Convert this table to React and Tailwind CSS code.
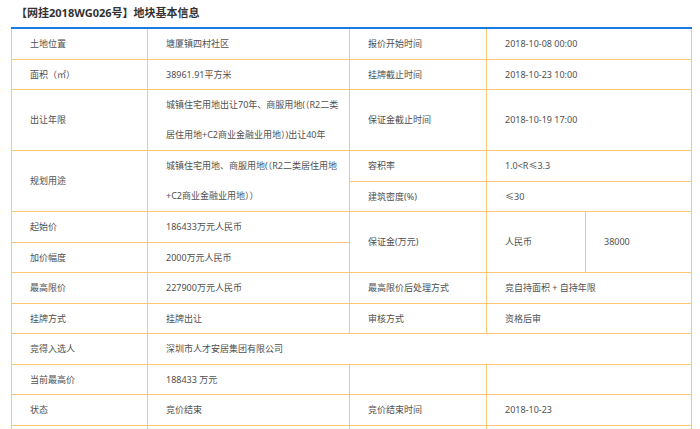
export default function App() {
  const td = "border border-[#fdc674] pl-[18px] pr-1 align-middle leading-[29.5px] whitespace-nowrap";
  return (
    <div className="w-[700px] h-[429px] overflow-hidden bg-white text-[#505050]" style={{ fontFamily: '"Noto Sans", "Noto Sans CJK SC", sans-serif' }}>
      <div className="pl-[16px] pt-[4px] h-[27px] text-[11px] font-bold text-[#333] leading-[17px]">【网挂2018WG026号】地块基本信息</div>
      <table className="ml-[11px] w-[680px] table-fixed border-collapse border-t-2 border-t-[#1a7be0] text-[9px]">
        <colgroup>
          <col className="w-[136px]" />
          <col className="w-[202px]" />
          <col className="w-[137px]" />
          <col className="w-[99px]" />
          <col className="w-[106px]" />
        </colgroup>
        <tbody>
          <tr>
            <td className={td}>土地位置</td>
            <td className={td}>塘厦镇四村社区</td>
            <td className={td}>报价开始时间</td>
            <td className={td} colSpan={2}>2018-10-08 00:00</td>
          </tr>
          <tr>
            <td className={td}>面积（㎡）</td>
            <td className={td}>38961.91平方米</td>
            <td className={td}>挂牌截止时间</td>
            <td className={td} colSpan={2}>2018-10-23 10:00</td>
          </tr>
          <tr>
            <td className={td}>出让年限</td>
            <td className={td + " !leading-[30px]"}>城镇住宅用地出让70年、商服用地(（R2二类<br />居住用地+C2商业金融业用地）)出让40年</td>
            <td className={td}>保证金截止时间</td>
            <td className={td} colSpan={2}>2018-10-19 17:00</td>
          </tr>
          <tr>
            <td className={td} rowSpan={2}>规划用途</td>
            <td className={td + " !leading-[30px]"} rowSpan={2}>城镇住宅用地、商服用地(（R2二类居住用地<br />+C2商业金融业用地））</td>
            <td className={td}>容积率</td>
            <td className={td} colSpan={2}>1.0&lt;R≤3.3</td>
          </tr>
          <tr>
            <td className={td}>建筑密度(%)</td>
            <td className={td} colSpan={2}>≤30</td>
          </tr>
          <tr>
            <td className={td}>起始价</td>
            <td className={td}>186433万元人民币</td>
            <td className={td} rowSpan={2}>保证金(万元)</td>
            <td className={td} rowSpan={2}>人民币</td>
            <td className={td} rowSpan={2}>38000</td>
          </tr>
          <tr>
            <td className={td}>加价幅度</td>
            <td className={td}>2000万元人民币</td>
          </tr>
          <tr>
            <td className={td}>最高限价</td>
            <td className={td}>227900万元人民币</td>
            <td className={td}>最高限价后处理方式</td>
            <td className={td} colSpan={2}>竞自持面积 + 自持年限</td>
          </tr>
          <tr>
            <td className={td}>挂牌方式</td>
            <td className={td}>挂牌出让</td>
            <td className={td}>审核方式</td>
            <td className={td} colSpan={2}>资格后审</td>
          </tr>
          <tr>
            <td className={td}>竞得入选人</td>
            <td className={td} colSpan={4}>深圳市人才安居集团有限公司</td>
          </tr>
          <tr>
            <td className={td}>当前最高价</td>
            <td className={td}>188433 万元</td>
            <td className={td}></td>
            <td className={td} colSpan={2}></td>
          </tr>
          <tr>
            <td className={td}>状态</td>
            <td className={td}>竞价结束</td>
            <td className={td}>竞价结束时间</td>
            <td className={td} colSpan={2}>2018-10-23</td>
          </tr>
          <tr>
            <td className={td}>&nbsp;</td>
            <td className={td}></td>
            <td className={td}></td>
            <td className={td} colSpan={2}></td>
          </tr>
        </tbody>
      </table>
    </div>
  );
}
